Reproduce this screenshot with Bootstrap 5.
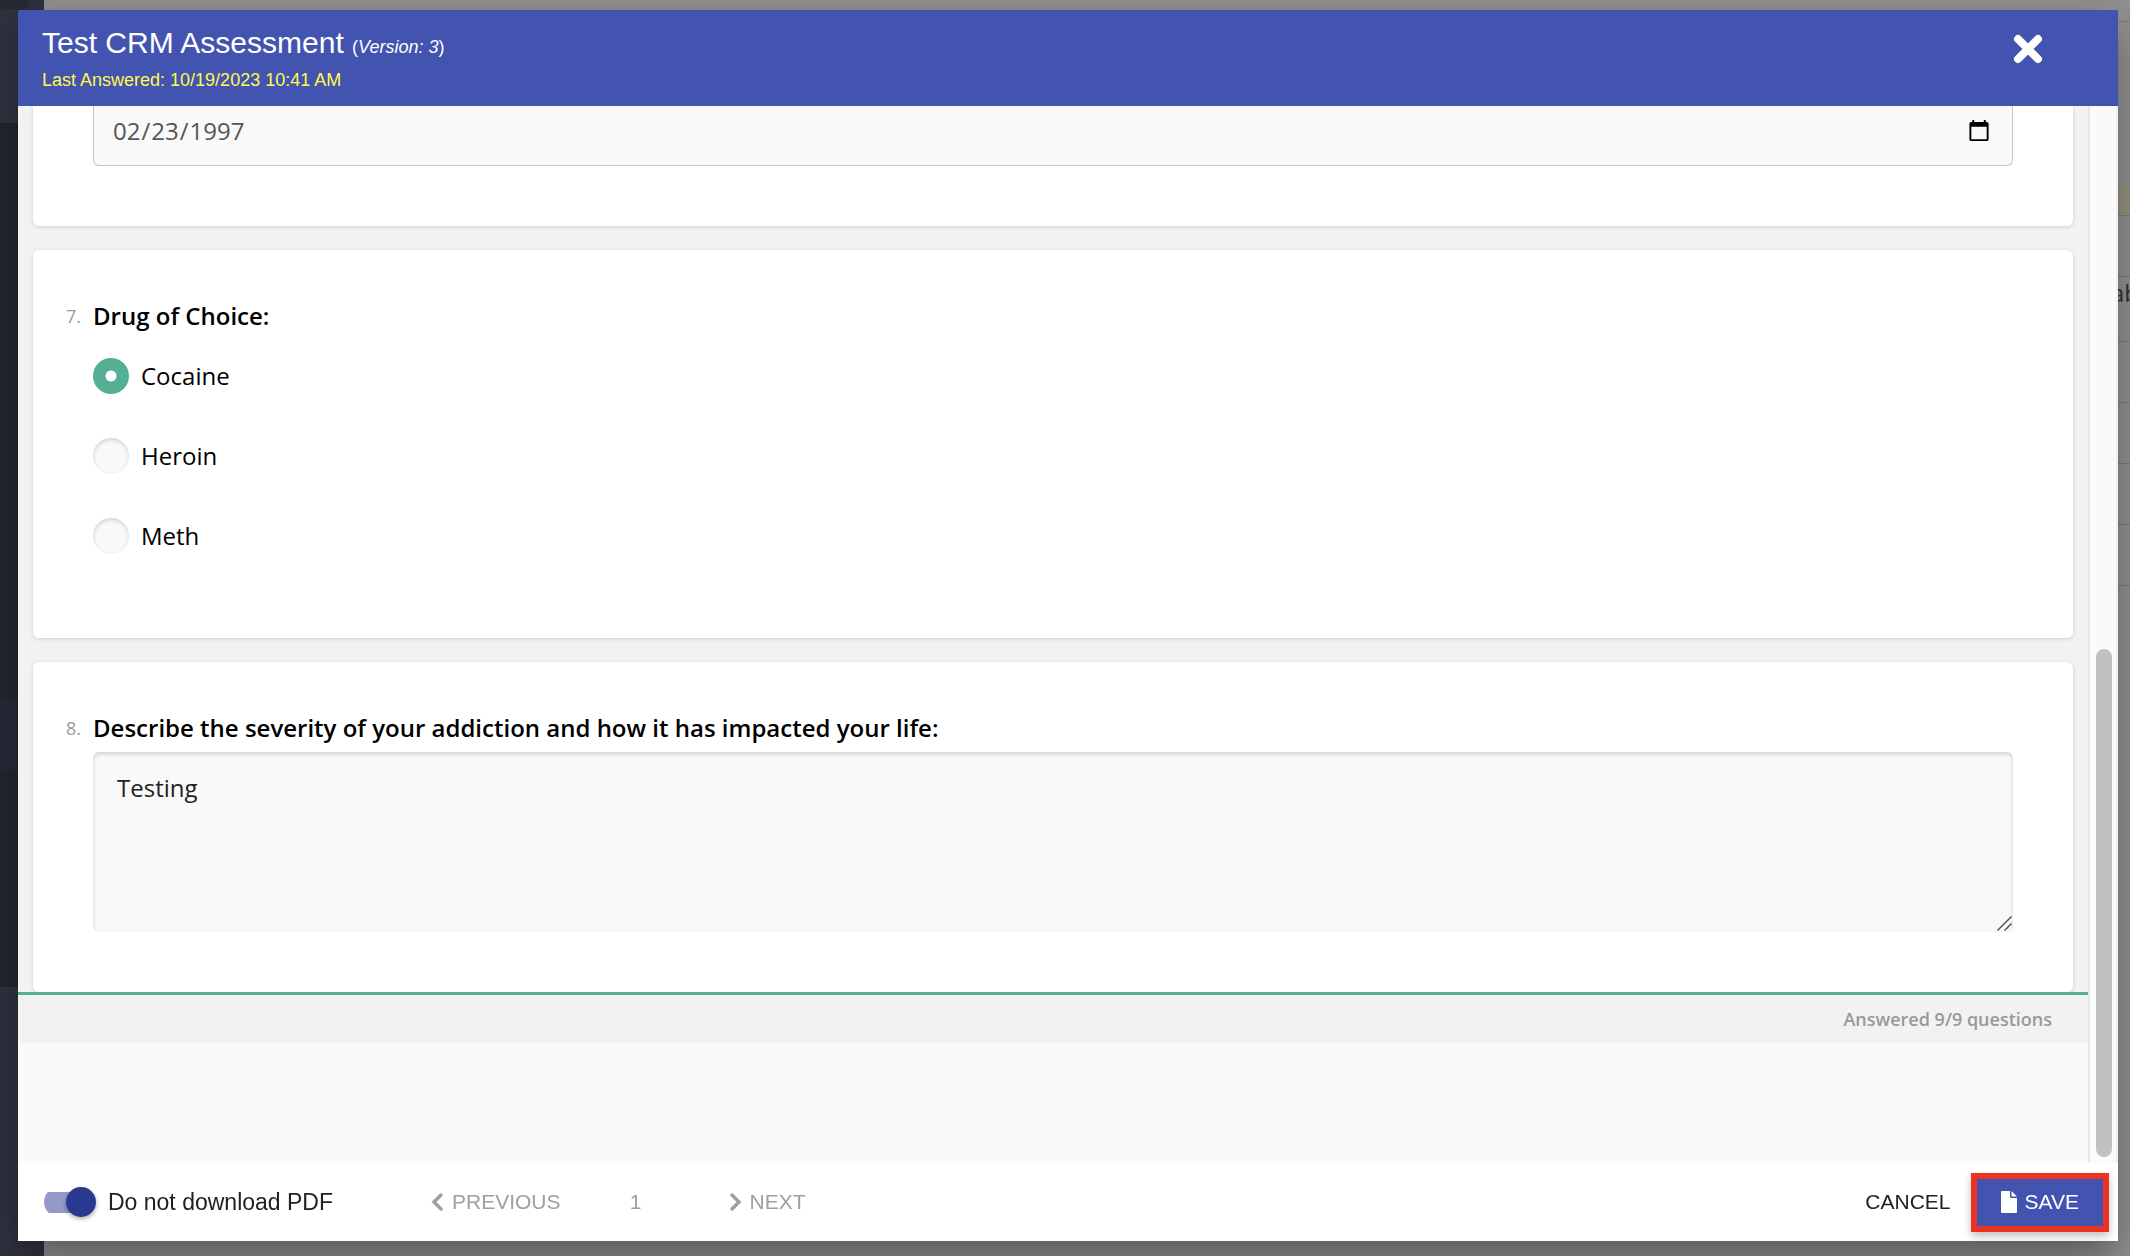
<!DOCTYPE html>
<html lang="en">
<head>
<meta charset="utf-8">
<meta name="viewport" content="width=device-width, initial-scale=1">
<title>Test CRM Assessment</title>
<link href="https://cdn.jsdelivr.net/npm/bootstrap@5.3.0/dist/css/bootstrap.min.css" rel="stylesheet">
<style>
html, body { height: 100%; }
body { font-family: "Liberation Sans", Arial, sans-serif; overflow: hidden; color: #212121; }
/* page behind the dialog */
.app-shell { height: 100vh; background: #919191; }
.app-side { width: 44px; background: #222630; }
.app-side .side-top { height: 10px; background: #2f3240; }
.app-side .side-top span { display: block; width: 29px; height: 10px; background: #262a34; border-bottom-right-radius: 8px; }
.app-side .side-brand { height: 113px; background: #303240; }
.app-side .side-gap { height: 576px; }
.app-side .side-current { height: 72px; background: #262b3a; }
.app-side .side-gap-low { height: 216px; }
.app-side .side-rest { background: #2f3240; }
.bg-list { width: 24px; font: 24px/24px "Open Sans", sans-serif; color: #333; }
.bg-list div { height: 61px; border-bottom: 1px solid #7b7b7b; }
.bg-list .bg-first { height: 22px; }
.bg-list .bg-space { height: 161px; border: 0; }
.bg-list .bg-mark { height: 33px; background: #96917f; }
.bg-list .bg-cell { height: 65px; padding: 4px 0 0 5px; }
/* dialog */
.dlg-layer { position: fixed; inset: 0; padding: 10px 12px 15px 18px; }
.dlg { background: #fff; box-shadow: 0 22px 30px -14px rgba(0,0,0,.2), 0 24px 38px 3px rgba(0,0,0,.14), 0 9px 46px 8px rgba(0,0,0,.12); }
.dlg-head { background: #4353b0; color: #fff; height: 96px; padding: 15px 74px 0 24px; }
.dlg-head h1 { font-size: 30px; line-height: 36px; font-weight: 400; margin: 0; }
.dlg-head h1 span { font-size: 18px; }
.dlg-head p { font-size: 18px; line-height: 20px; margin: 5px 0 0; color: #fff950; }
.close-x { border: 0; background: none; color: #fff; width: 32px; height: 32px; padding: 0; margin-top: 8px; }
.close-x svg { display: block; }
.survey { background: #fafafa; font-family: "Open Sans", "Noto Sans", sans-serif; color: #000; border-right: 2px solid #e8e8e8; min-width: 0; }
.q-area { background: #f2f2f2; padding: 0 15px; gap: 24px; }
.q-card { background: #fff; border-radius: 6px; box-shadow: 0 1px 4px rgba(0,0,0,.15); padding: 46px 60px 60px 60px; position: relative; border: 0; }
.q-card.q-cut { padding-top: 0; border-top-left-radius: 0; border-top-right-radius: 0; }
.q-card.q-radio { padding-bottom: 84px; }
.q-num { width: 60px; margin-left: -60px; padding-right: 12px; text-align: right; font-size: 18px; color: #999; font-weight: 500; }
.q-title { font-size: 24px; line-height: 40px; font-weight: 600; margin: 0; }
.date-box { height: 60px; border: 1px solid #c6c6c6; border-width: 0 1px 1px; border-radius: 0 0 6px 6px; background: #f9f9f9; padding: 0 19px 10px 19px; font-size: 24px; color: #555; width: 100%; display: block; }
.date-box::-webkit-datetime-edit-text { padding: 0 1px; }
.opt-list { gap: 44px; padding-top: 22px; }
.opt { gap: 12px; font-size: 24px; line-height: 36px; }
.opt input { appearance: none; width: 36px; height: 36px; margin: 0; border-radius: 50%; background: #f9f9f9; box-shadow: inset 0 2px 4px rgba(0,0,0,.16); flex: none; }
.opt input:checked { background: radial-gradient(circle, #fff 0 5px, #54af95 6px); box-shadow: none; }
.answer { display: block; width: 100%; height: 180px; resize: none; border: 0; border-radius: 6px; background: #f9f9f9; box-shadow: inset 0 2px 4px rgba(0,0,0,.16); padding: 18px 24px; font-size: 24px; line-height: 36px; color: #222; }
.answer-wrap { padding-top: 4px; }
.grip { position: absolute; right: 0; bottom: 0; }
.progress-line { border-top: 3px solid #54af95; background: #f2f2f2; height: 51px; line-height: 48px; padding-right: 36px; font-size: 18px; font-weight: 600; color: #999; }
.bar-track { width: 28px; background: #fafafa; border-right: 2px solid #efefef; padding: 0 4px 6px 6px; }
.bar-thumb { height: 48.3%; border-radius: 8px; background: #c1c1c1; }
.dlg-foot { height: 78px; padding: 0 9px 0 26px; }
.pdf-toggle { appearance: none; width: 52px; height: 30px; margin: 0 12px 0 0; background: linear-gradient(#939ac8, #939ac8) 0 50% / 42px 21px no-repeat; border-radius: 15px; position: relative; }
.pdf-toggle::before { content: ""; position: absolute; right: 0; top: 0; width: 30px; height: 30px; border-radius: 50%; background: #293990; box-shadow: 0 2px 4px rgba(0,0,0,.35); }
.toggle-text { font-size: 23px; line-height: 30px; }
.foot-btn { border: 0; background: none; padding: 0; font-size: 21px; line-height: 30px; color: #212121; border-radius: 0; display: flex; align-items: center; gap: 8px; }
.foot-btn:disabled, .page-no { color: #9f9f9f; opacity: 1; border: 0; }
.page-no { font-size: 21px; width: 150px; margin-right: 18px; text-align: center; line-height: 30px; }
.pager { margin-left: 98px; }
.save-btn { background: #4353b0; border: 6px solid #e93323; color: #fff; height: 59px; padding: 0 24px 0 24px; margin-left: 20px; box-shadow: 0 4px 8px rgba(0,0,0,.25); }
.save-btn:hover { background: #4353b0; color: #fff; border-color: #e93323; }
</style>
</head>
<body>
<div class="app-shell d-flex" aria-hidden="true">
  <div class="app-side d-flex flex-column">
    <div class="side-top"><span></span></div>
    <div class="side-brand"></div>
    <div class="side-gap"></div>
    <div class="side-current"></div>
    <div class="side-gap-low"></div>
    <div class="side-rest flex-grow-1"></div>
  </div>
  <div class="bg-list ms-auto overflow-hidden">
    <div class="bg-first"></div><div class="bg-space"></div><div class="bg-mark"></div><div></div>
    <div class="bg-cell">ab</div>
    <div></div><div></div><div></div><div></div>
  </div>
</div>

<div class="dlg-layer d-flex">
  <section class="dlg d-flex flex-column flex-grow-1" role="dialog" aria-labelledby="dlgTitle">
    <header class="dlg-head d-flex justify-content-between align-items-start">
      <div>
        <h1 id="dlgTitle">Test CRM Assessment <span>(<i>Version: 3</i>)</span></h1>
        <p>Last Answered: 10/19/2023 10:41 AM</p>
      </div>
      <button type="button" class="close-x" aria-label="Close">
        <svg width="32" height="32" viewBox="0 0 32 32"><path d="M6 6L26 26M26 6L6 26" stroke="currentColor" stroke-width="8" stroke-linecap="round"/></svg>
      </button>
    </header>

    <div class="d-flex flex-grow-1 overflow-hidden">
      <form class="survey flex-grow-1">
        <div class="q-area d-flex flex-column overflow-hidden">
          <div class="q-card q-cut">
            <input class="date-box" type="date" value="1997-02-23" aria-label="Date of birth">
          </div>

          <fieldset class="q-card q-radio">
            <div class="q-title d-flex" id="q7"><span class="q-num">7.</span>Drug of Choice:</div>
            <div class="opt-list d-flex flex-column" role="radiogroup" aria-labelledby="q7">
              <label class="opt d-flex align-items-center"><input type="radio" name="drug" checked>Cocaine</label>
              <label class="opt d-flex align-items-center"><input type="radio" name="drug">Heroin</label>
              <label class="opt d-flex align-items-center"><input type="radio" name="drug">Meth</label>
            </div>
          </fieldset>

          <div class="q-card">
            <label class="q-title d-flex" for="severity"><span class="q-num">8.</span>Describe the severity of your addiction and how it has impacted your life:</label>
            <div class="answer-wrap position-relative">
              <textarea class="answer" id="severity">Testing</textarea>
              <svg class="grip" width="17" height="17" viewBox="0 0 17 17" stroke="#555" stroke-width="1.500"><path d="M1.500 15.500L15.500 1.500M8.500 15.500L15.500 8.500"/></svg>
            </div>
          </div>
        </div>
        <div class="progress-line text-end">Answered 9/9 questions</div>
      </form>
      <div class="bar-track d-flex flex-column justify-content-end"><div class="bar-thumb"></div></div>
    </div>

    <footer class="dlg-foot d-flex align-items-center">
      <input class="pdf-toggle" type="checkbox" role="switch" id="noPdf" checked>
      <label class="toggle-text" for="noPdf">Do not download PDF</label>
      <nav class="pager d-flex align-items-center" aria-label="Pages">
        <button type="button" class="btn foot-btn" disabled>
          <svg width="13" height="20" viewBox="0 0 13 20" fill="none" stroke="currentColor" stroke-width="3.500" stroke-linecap="round"><path d="M10 3L3 10L10 17"/></svg>PREVIOUS</button>
        <span class="page-no" aria-current="page">1</span>
        <button type="button" class="btn foot-btn" disabled>
          <svg width="13" height="20" viewBox="0 0 13 20" fill="none" stroke="currentColor" stroke-width="3.500" stroke-linecap="round"><path d="M3 3L10 10L3 17"/></svg>NEXT</button>
      </nav>
      <button type="button" class="btn foot-btn ms-auto">CANCEL</button>
      <button type="button" class="btn foot-btn save-btn">
        <svg width="16" height="22" viewBox="0 0 16 22" fill="currentColor"><path d="M1 0H9V6Q9 7 10 7H16V21Q16 22 15 22H1Q0 22 0 21V1Q0 0 1 0ZM10.500 0L16 5.500H10.500Z"/></svg>SAVE</button>
    </footer>
  </section>
</div>
<script src="https://cdn.jsdelivr.net/npm/bootstrap@5.3.0/dist/js/bootstrap.bundle.min.js"></script>
</body>
</html>
